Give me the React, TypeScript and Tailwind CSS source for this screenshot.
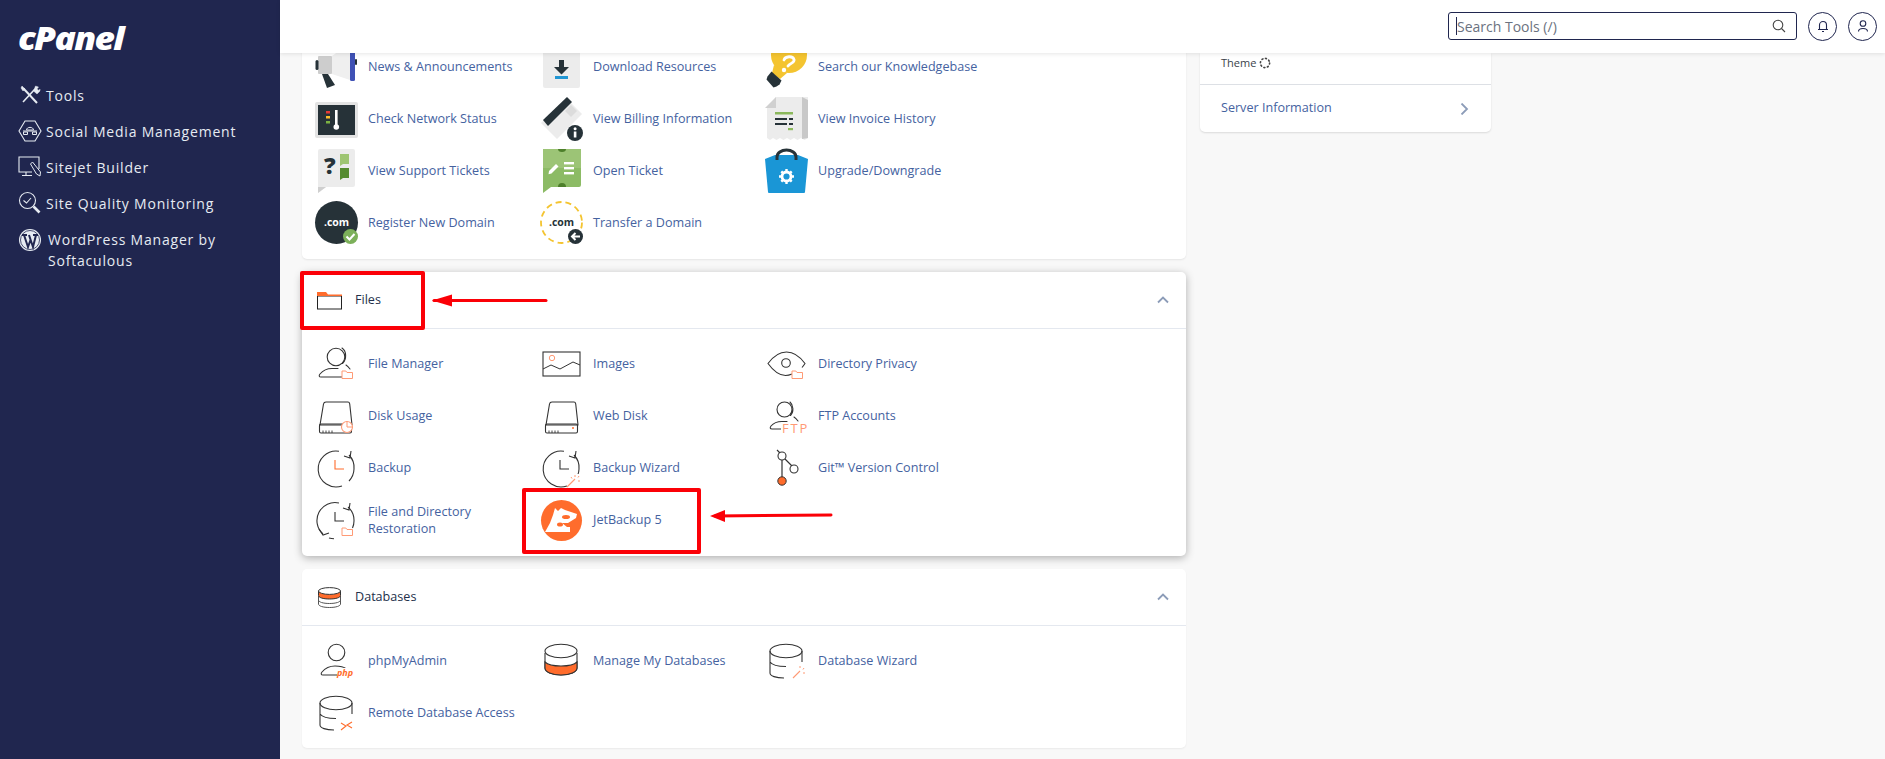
import React from "react";

const INK = "#333";
const OR = "#ff6c2c";
const ORL = "#ff9a75";

function Svg({ children, size = 43 }: { children: React.ReactNode; size?: number }) {
  return (
    <svg width={size} height={size} viewBox="0 0 43 43" fill="none" className="shrink-0 block overflow-visible">
      {children}
    </svg>
  );
}

const Folder = ({ x, y }: { x: number; y: number }) => (
  <path d={`M${x} ${y}v7.500h10.500v-6h-5.500l-1.200-1.500z`} stroke={ORL} strokeWidth="1" fill="#fff" />
);

const Person = () => (
  <g stroke={INK} strokeWidth="1.100" strokeLinecap="round">
    <circle cx="21" cy="15" r="8.800" />
    <path d="M27 6c4.500 3 5 11 .5 15.500M31 23c1.500 1 2.700 2.300 4 4" />
    <path d="M27 35H6c-2 0-2.300-1.500-1-3 2.500-3 7-5.500 12-5.500h6" />
  </g>
);

const Megaphone = () => (
  <Svg>
    <path d="M17 11L35 -2v37L17 29z" fill="#efefef" />
    <rect x="3" y="11" width="14" height="18" rx="1" fill="#cdcdcd" />
    <rect x="0.500" y="15" width="3" height="10" rx="1.500" fill="#263238" />
    <path d="M7 29h6l7 11-8 3z" fill="#263238" />
    <rect x="35" y="-10" width="5" height="46" rx="1.500" fill="#3f51b5" />
    <rect x="40" y="14" width="2" height="6" rx="1" fill="#263238" />
  </Svg>
);
const Download = () => (
  <Svg>
    <rect x="3" y="-8" width="37" height="51" rx="2" fill="#ececec" />
    <path d="M19 15h5v7h5l-7.500 7.500L14 22h5z" fill="#263238" />
    <rect x="15" y="31" width="13" height="3" fill="#2196d3" />
  </Svg>
);
const Bulb = () => (
  <Svg>
    <circle cx="24" cy="10" r="18" fill="#f4c430" />
    <path d="M9 20l13 8-7 6-8-6z" fill="#f4c430" />
    <path d="M5 27l10 9-2 4-3 2-3 1-7-8 1-3z" fill="#263238" transform="translate(1.500 -0.500)" />
    <path d="M19 15c1-4 9-4.500 10-.5 1 3.500-4 3.500-6 6.500" stroke="#fff" strokeWidth="2.800" fill="none" strokeLinecap="round" />
    <circle cx="19" cy="25" r="2.200" fill="#fff" />
  </Svg>
);
const Network = () => (
  <Svg>
    <rect x="0" y="5" width="43" height="36" rx="2" fill="#e3e3e3" />
    <rect x="3" y="8" width="37" height="30" fill="#263238" />
    <rect x="11" y="14" width="4" height="2.500" fill="#e53935" />
    <rect x="11" y="19" width="4" height="2.500" fill="#fbc02d" />
    <rect x="11" y="24" width="4" height="2.500" fill="#7cb342" />
    <rect x="20" y="13" width="2.600" height="16" fill="#fff" />
    <circle cx="21.300" cy="30" r="2.800" fill="#fff" />
  </Svg>
);
const Billing = () => (
  <Svg>
    <path d="M0 26L25 1l16 16-25 25z" fill="#ececec" transform="translate(1 0)" />
    <path d="M3 23L27 0l5 5L8 29z" fill="#263238" />
    <path d="M28 12l6-6 6 6-6 6z" fill="#dcdcdc" transform="translate(-3 2)" />
    <circle cx="35" cy="36" r="8" fill="#263238" />
    <rect x="33.800" y="34.500" width="2.600" height="6" fill="#fff" />
    <circle cx="35.100" cy="31.800" r="1.500" fill="#fff" />
  </Svg>
);
const Invoice = () => (
  <Svg>
    <path d="M11 0h32v41l-3.500 2-3.500-2-3.500 2-3.500-2-3.500 2-3.500-2-3.500 2-3.500-2-3.500 2-3.500-2-3 2-3-2V11z" fill="#ececec" />
    <path d="M37 0l6 3v38l-6 1z" fill="#c8c8c8" />
    <path d="M0 11L11 0v11z" fill="#d0d0d0" />
    <rect x="10" y="15" width="18" height="2.500" fill="#8bb85c" />
    <rect x="10" y="21" width="12" height="2" fill="#263238" />
    <rect x="24" y="21" width="4" height="2" fill="#263238" />
    <rect x="10" y="26" width="12" height="2" fill="#263238" />
    <rect x="24" y="26" width="4" height="2" fill="#263238" />
    <rect x="23" y="31" width="5" height="2.200" fill="#8bb85c" />
  </Svg>
);
const Support = () => (
  <Svg>
    <path d="M3 2a2 2 0 012-2h33a2 2 0 012 2v34a2 2 0 01-2 2H11l-8 6z" fill="#ececec" />
    <path d="M3 44l8-6H3z" fill="#cfcfcf" />
    <text x="9" y="25" fontFamily="'Open Sans', sans-serif" fontWeight="800" fontSize="23" fill="#263238">?</text>
    <path d="M25 5h9v10h-6l-3 2z" fill="#9ec572" />
    <path d="M25 19h9v10h-6l-3 2z" fill="#558b2f" />
  </Svg>
);
const Ticket = () => (
  <Svg>
    <path d="M3 2a2 2 0 012-2h34a2 2 0 012 2v34a2 2 0 01-2 2H11l-8 6z" fill="#8cbb65" />
    <path d="M3 0h38v19H3z" fill="#9cc476" />
    <path d="M18 0a4 3 0 008 0z" fill="#4d7f2a" />
    <path d="M18 38a4 4 0 018 0z" fill="#4d7f2a" />
    <path d="M9 22l7-7 2.500 2.500-7 7-3 .8z" fill="#fff" />
    <rect x="24" y="13" width="10" height="2.400" fill="#fff" />
    <rect x="24" y="18" width="10" height="2.400" fill="#fff" />
    <rect x="24" y="23" width="10" height="2.400" fill="#fff" />
  </Svg>
);
const Bag = () => (
  <Svg>
    <path d="M0 10l10-4h23l10 4-3 33a1 1 0 01-1 1H4a1 1 0 01-1-1z" fill="#1a96d6" />
    <path d="M12 11V8a9.500 7 0 0119 0v3" stroke="#263238" strokeWidth="3" />
    <g stroke="#fff" strokeWidth="2.400">
      <path d="M21.500 20v3M21.500 32v3M14 27.500h3M26 27.500h3M16.300 22.300l2 2M24.700 30.700l2 2M26.700 22.300l-2 2M18.300 30.700l-2 2" />
    </g>
    <circle cx="21.500" cy="27.500" r="4.500" stroke="#fff" strokeWidth="2.800" />
  </Svg>
);
const Register = () => (
  <Svg>
    <circle cx="21.500" cy="21.500" r="21.500" fill="#263238" />
    <text x="21.500" y="25" textAnchor="middle" fontFamily="'Open Sans', sans-serif" fontWeight="700" fontSize="10.500" fill="#fff">.com</text>
    <circle cx="35.500" cy="35.500" r="7.500" fill="#7cb05a" />
    <path d="M31.500 35.500l3 3 5-5.500" stroke="#fff" strokeWidth="2" />
  </Svg>
);
const Transfer = () => (
  <Svg>
    <circle cx="21.500" cy="21.500" r="20.500" stroke="#f4c430" strokeWidth="1.800" strokeDasharray="6 4" />
    <text x="21.500" y="25" textAnchor="middle" fontFamily="'Open Sans', sans-serif" fontWeight="700" fontSize="10.500" fill="#263238">.com</text>
    <circle cx="35.500" cy="35.500" r="7.500" fill="#263238" />
    <path d="M40 35.500h-7M35.500 32l-3.500 3.500 3.500 3.500" stroke="#fff" strokeWidth="2" />
  </Svg>
);
const FileManager = () => (
  <Svg>
    <Person />
    <Folder x={27} y={29} />
  </Svg>
);
const Images = () => (
  <Svg>
    <rect x="3" y="10" width="37" height="24" stroke={INK} strokeWidth="1.100" />
    <circle cx="12" cy="16" r="2.700" stroke={ORL} strokeWidth="1" />
    <path d="M3 27l8-4 9 4 13-7 7 3" stroke={INK} strokeWidth="1" />
  </Svg>
);
const DirPrivacy = () => (
  <Svg>
    <path d="M27 32c-2 .9-4 1.500-6.500 1.500C13 33.500 7 27 3 21.500 7 16 13 10 21.500 10S36 16 40 21.500c-1 1.500-2 2.800-3 4" stroke={INK} strokeWidth="1.100" />
    <circle cx="21" cy="21" r="4.300" stroke={INK} strokeWidth="1.100" />
    <Folder x={27} y={29} />
  </Svg>
);
const Disk = () => (
  <g stroke={INK} strokeWidth="1.100">
    <path d="M12 8h22c1 0 1.500 .8 1.700 1.800L38 31H6l3.500-21c.2-1 1.500-2 2.500-2z" />
    <rect x="5.500" y="30" width="32" height="9" rx="1.500" />
    <path d="M9 39v-2.500M12 39v-2.500M15 39v-2.500M18 39v-2.500" strokeWidth="0.900" />
  </g>
);
const DiskUsage = () => (
  <Svg>
    <g transform="translate(-1 0)">
      <Disk />
    </g>
    <circle cx="32" cy="33" r="5.500" stroke={ORL} strokeWidth="1.100" fill="#fff" />
    <path d="M32 33v-5.500M32 33h5.500" stroke={ORL} strokeWidth="1" />
  </Svg>
);
const WebDisk = () => (
  <Svg>
    <Disk />
    <circle cx="33" cy="34" r="1" fill={OR} />
  </Svg>
);
const FtpIcon = () => (
  <Svg>
    <g stroke={INK} strokeWidth="1.100" strokeLinecap="round">
      <circle cx="19.500" cy="15.500" r="7.500" />
      <path d="M25 8c3.500 3 4 10 .5 13.500M29 23c1.500 1 2.700 2.300 4 4" />
      <path d="M16 35H7c-2 0-2.300-1.300-1-3 2.500-3 6-4.500 11-4.500h5" />
    </g>
    <rect x="16" y="28" width="26" height="12" fill="#fff" />
    <text x="17" y="39" fontFamily="'Open Sans', sans-serif" fontSize="13" letterSpacing="1.800" fill={ORL}>FTP</text>
  </Svg>
);
const Clock = ({ hand }: { hand: string }) => (
  <g strokeWidth="1.100">
    <path d="M24 5.200A18 18 0 1027 40M34 9a18 18 0 015 14 18 18 0 01-5 12" stroke={INK} />
    <path d="M36 5l-1 7-6-2" stroke={INK} />
    <path d="M20 14v9h9" stroke={hand} />
  </g>
);
const Backup = () => (
  <Svg>
    <Clock hand={OR} />
  </Svg>
);
const BackupWizard = () => (
  <Svg>
    <Clock hand={INK} />
    <rect x="27" y="28" width="16" height="15" fill="#fff" />
    <path d="M27 41l8-8" stroke={ORL} strokeWidth="1.100" />
    <path d="M35 29v2M39 30l-1 1.500M40 35h-2M31 31l1 1.500" stroke={ORL} strokeWidth="1" />
  </Svg>
);
const Restoration = () => (
  <Svg>
    <path d="M24 5A18 18 0 008 36M14 40c2 .6 3.500 .8 5 .8M33 9a18 18 0 016 14c0 3-.6 5-1.500 7" stroke={INK} strokeWidth="1.100" />
    <path d="M35 5l-1 7-6-2M4 31l4 6 6-2" stroke={INK} strokeWidth="1.100" />
    <path d="M20 14v9h9" stroke={INK} strokeWidth="1.100" />
    <Folder x={27} y={30} />
  </Svg>
);
const Git = () => (
  <Svg>
    <path d="M12 4l3 3M17 14v17M20 13l7 7" stroke={INK} strokeWidth="1.200" />
    <circle cx="17" cy="10" r="4" stroke={INK} strokeWidth="1.100" />
    <circle cx="29" cy="23" r="4" stroke={INK} strokeWidth="1.100" />
    <circle cx="17" cy="35" r="4.200" fill={OR} stroke={INK} strokeWidth="1" />
  </Svg>
);
const JetBackup = () => (
  <Svg>
    <circle cx="21.500" cy="22.500" r="20.500" fill="#ff6c2c" />
    <path d="M15 10l3 3 3-3 4 2 12 4-1 4-8 5h-6l5 4h3v5H5l5-9 3-8z" fill="#fff" />
    <ellipse cx="26" cy="19" rx="4" ry="2" fill="#ff6c2c" />
    <ellipse cx="20" cy="26.500" rx="3" ry="2" fill="#ff6c2c" />
  </Svg>
);
const PhpIcon = () => (
  <Svg>
    <g stroke={INK} strokeWidth="1.100" strokeLinecap="round">
      <circle cx="21.500" cy="13.500" r="8.300" />
      <path d="M22 36H8c-2 0-2.300-1.500-1-3 2.500-3 7-6 13-6s9 1 11.500 3" />
    </g>
    <rect x="22" y="29" width="17" height="9" fill="#fff" />
    <text x="22" y="37" fontFamily="'Open Sans', sans-serif" fontStyle="italic" fontWeight="700" fontSize="9" fill={OR}>php</text>
  </Svg>
);
const ManageDb = () => (
  <Svg>
    <path d="M5 14v15c0 4 7 7 16 7s16-3 16-7V14" fill="#fff" stroke={INK} strokeWidth="1.100" />
    <path d="M5 23c3 3 9 4 16 4s13-1 16-4v6c0 4-7 7-16 7s-16-3-16-7z" fill={OR} stroke={INK} strokeWidth="1.100" />
    <ellipse cx="21" cy="12" rx="16" ry="6.800" fill="#fff" stroke={INK} strokeWidth="1.100" />
  </Svg>
);
const RemoteDb = () => (
  <Svg>
    <ellipse cx="21" cy="12" rx="16" ry="6.800" stroke={INK} strokeWidth="1.100" />
    <path d="M5 12v22c0 3 6 5 14 5M37 12v11M5 23c2 3 8 4.500 16 4.500" stroke={INK} strokeWidth="1.100" />
    <path d="M26 39l5-4-5-3M37 31l-5 3 5 3" stroke={OR} strokeWidth="1.100" />
  </Svg>
);
const DbWizard = () => (
  <Svg>
    <ellipse cx="21" cy="12" rx="16" ry="6.800" stroke={INK} strokeWidth="1.100" />
    <path d="M5 12v22c0 3 6 5 14 5M37 12v11M5 23c2 3 8 4.500 16 4.500" stroke={INK} strokeWidth="1.100" />
    <path d="M28 39l7-7" stroke={ORL} strokeWidth="1.100" />
    <path d="M35 27v2M39 29l-1 1.500M40 34h-2" stroke={ORL} strokeWidth="1" />
  </Svg>
);

const HeadFolder = () => (
  <svg width="25" height="19" viewBox="0 0 25 19" fill="none" className="shrink-0">
    <rect x="0.500" y="5" width="24" height="13" stroke="#222" />
    <path d="M0 5V1h9l2 2.500h14V5z" fill={OR} />
  </svg>
);
const HeadDb = () => (
  <svg width="25" height="21" viewBox="0 0 25 21" fill="none" className="shrink-0">
    <path d="M1.500 13v4c0 2 4.500 3.500 11 3.500s11-1.500 11-3.500v-4" stroke="#555" />
    <path d="M1.500 9v4c0 2 4.500 3.500 11 3.500s11-1.500 11-3.500V9" stroke="#555" />
    <path d="M1.500 4v4.500c0 2 4.500 3.500 11 3.500s11-1.500 11-3.500V4z" fill={OR} stroke="#333" />
    <ellipse cx="12.500" cy="4" rx="11" ry="3.400" fill="#fff" stroke="#333" />
  </svg>
);

const Chevron = ({ dir = "up" }: { dir?: "up" | "right" }) => (
  <svg width="12" height="12" viewBox="0 0 12 12" fill="none" stroke="#8c9cb8" strokeWidth="1.800" className="shrink-0">
    <path d={dir === "up" ? "M1 8.500l5-5 5 5" : "M3.500 .5l5.500 5.500-5.500 5.500"} />
  </svg>
);

type Tool = { label: React.ReactNode; icon: React.ReactNode };

function ToolGrid({ items }: { items: Tool[] }) {
  return (
    <div className="grid grid-cols-[225px_225px_225px] gap-y-[9px]">
      {items.map((t, i) => (
        <div key={i} className="flex items-center gap-[10px] h-[43px]">
          {t.icon}
          <span className="text-[12.6px] leading-[17px] text-[#45629f]">{t.label}</span>
        </div>
      ))}
    </div>
  );
}

function Section({ title, icon, items, strong, pad }: { title: string; icon: React.ReactNode; items: Tool[]; strong?: boolean; pad: string }) {
  return (
    <section className={`bg-white rounded-[5px] ${strong ? "shadow-[0_2px_8px_rgba(0,0,0,0.3)]" : "shadow-[0_1px_2px_rgba(0,0,0,0.06)]"}`}>
      <div className="h-[57px] border-b border-[#e4e8ef] flex items-center pl-[15px] pr-[17px]">
        <div className="w-[38px] shrink-0 flex items-center">{icon}</div>
        <h2 className="text-[12.6px] text-[#23304a] font-normal flex-1">{title}</h2>
        <Chevron />
      </div>
      <div className={pad}>
        <ToolGrid items={items} />
      </div>
    </section>
  );
}

const support: Tool[] = [
  { label: "News & Announcements", icon: <Megaphone /> },
  { label: "Download Resources", icon: <Download /> },
  { label: "Search our Knowledgebase", icon: <Bulb /> },
  { label: "Check Network Status", icon: <Network /> },
  { label: "View Billing Information", icon: <Billing /> },
  { label: "View Invoice History", icon: <Invoice /> },
  { label: "View Support Tickets", icon: <Support /> },
  { label: "Open Ticket", icon: <Ticket /> },
  { label: "Upgrade/Downgrade", icon: <Bag /> },
  { label: "Register New Domain", icon: <Register /> },
  { label: "Transfer a Domain", icon: <Transfer /> },
];
const files: Tool[] = [
  { label: "File Manager", icon: <FileManager /> },
  { label: "Images", icon: <Images /> },
  { label: "Directory Privacy", icon: <DirPrivacy /> },
  { label: "Disk Usage", icon: <DiskUsage /> },
  { label: "Web Disk", icon: <WebDisk /> },
  { label: "FTP Accounts", icon: <FtpIcon /> },
  { label: "Backup", icon: <Backup /> },
  { label: "Backup Wizard", icon: <BackupWizard /> },
  { label: "Git™ Version Control", icon: <Git /> },
  { label: <>File and Directory<br />Restoration</>, icon: <Restoration /> },
  { label: "JetBackup 5", icon: <JetBackup /> },
];
const databases: Tool[] = [
  { label: "phpMyAdmin", icon: <PhpIcon /> },
  { label: "Manage My Databases", icon: <ManageDb /> },
  { label: "Database Wizard", icon: <DbWizard /> },
  { label: "Remote Database Access", icon: <RemoteDb /> },
];

const NavIcon = ({ children }: { children: React.ReactNode }) => (
  <svg width="24" height="24" viewBox="0 0 24 24" fill="none" stroke="#e6ebf2" strokeWidth="1.100" className="shrink-0">
    {children}
  </svg>
);

const nav: { label: string; icon: React.ReactNode }[] = [
  {
    label: "Tools",
    icon: (
      <NavIcon>
        <path d="M5.500 5.500L19 20" strokeWidth="2" />
        <path d="M17 6L5 19" strokeWidth="1.600" />
        <path d="M15.500 8l2-5 3 1-1.500 2 2 1.500 1-1.500 0 2-3 3z" fill="#e6ebf2" strokeWidth="0.400" />
        <path d="M4 3l3 3-2 2-2-3z" fill="#e6ebf2" strokeWidth="0.500" />
      </NavIcon>
    ),
  },
  {
    label: "Social Media Management",
    icon: (
      <NavIcon>
        <path d="M7 2h10l6 10-6 10H7L1 12z" />
        <path d="M8.500 11c0-3.500 7-3.500 7 0zM5 12h14M5.500 15.500h4V13h-4zM14.500 15.500h4V13h-4z" strokeWidth="1" />
      </NavIcon>
    ),
  },
  {
    label: "Sitejet Builder",
    icon: (
      <NavIcon>
        <path d="M21 14V2H1v15h13" />
        <path d="M8 17v3M4 20.500h10" />
        <path d="M12.500 9l2-2 8 10-.5 4-3.500-2z" fill="#20264f" strokeWidth="1" />
      </NavIcon>
    ),
  },
  {
    label: "Site Quality Monitoring",
    icon: (
      <NavIcon>
        <circle cx="9.500" cy="9.500" r="8" />
        <path d="M5.500 9.500l3 2.500 4.500-5" />
        <path d="M15.500 15.500l6 6" strokeWidth="2.600" />
      </NavIcon>
    ),
  },
];

function Annotation() {
  return (
    <svg width="420" height="300" viewBox="0 0 420 300" fill="none" className="absolute left-[420px] top-[260px] pointer-events-none">
      <path d="M14 40.500h112" stroke="#fb0007" strokeWidth="3" strokeLinecap="round" />
      <path d="M12 40.500l20-6v12z" fill="#fb0007" />
      <path d="M295 256l116 -1" stroke="#fb0007" strokeWidth="3" strokeLinecap="round" />
      <path d="M290 256l15-6v12z" fill="#fb0007" />
    </svg>
  );
}

export default function App() {
  return (
    <div className="relative flex h-screen overflow-hidden bg-[#f8f8f8] [font-family:'Open_Sans',sans-serif]">
      <aside className="w-[280px] shrink-0 bg-[#20264f] pl-[18px] pr-[10px] text-[#e6ebf2]">
        <div className="h-[77px] pt-[21px]">
          <span className="block origin-left scale-x-[1.14] text-[31px] leading-[34px] font-extrabold italic tracking-[-1.500px] text-white">cPanel</span>
        </div>
        <nav className="text-[14px] tracking-[0.8px]">
          {nav.map((n, i) => (
            <div key={i} className="flex items-center gap-[4px] h-[36px]">
              {n.icon}
              <span>{n.label}</span>
            </div>
          ))}
          <div className="flex items-start gap-[6px] pt-[8px]">
            <svg width="24" height="24" viewBox="0 0 24 24" className="shrink-0 mt-[-1px]">
              <circle cx="12" cy="12" r="11" fill="#e6ebf2" />
              <circle cx="12" cy="12" r="9.500" fill="none" stroke="#20264f" strokeWidth="0.800" />
              <path d="M4 7h5M15 7h5M6 7l4 12 2.500-7M11 7l4 12 3-12" stroke="#20264f" strokeWidth="2" fill="none" />
            </svg>
            <span className="leading-[21px]">WordPress Manager by<br />Softaculous</span>
          </div>
        </nav>
      </aside>

      <div className="flex-1 flex flex-col min-w-0">
        <header className="relative z-10 h-[53px] shrink-0 bg-white shadow-[0_1px_4px_rgba(0,0,0,0.1)] flex items-center justify-end gap-[11px] pr-[8px]">
          <div className="w-[349px] h-[28px] mb-[1px] rounded-[3px] border border-[#20264f] flex items-center pl-[7px] pr-[10px]">
            <span className="w-px h-[18px] bg-[#20264f] shrink-0" />
            <span className="flex-1 text-[14px] text-[#6b7280]">Search Tools (/)</span>
            <svg width="14" height="14" viewBox="0 0 14 14" fill="none" stroke="#444" strokeWidth="1.100">
              <circle cx="6" cy="6" r="4.800" />
              <path d="M9.500 9.500L13 13" />
            </svg>
          </div>
          <div className="w-[29px] h-[29px] mb-[1px] rounded-full border border-[#20264f] flex items-center justify-center">
            <svg width="14" height="14" viewBox="0 0 14 14" fill="none" stroke="#20264f" strokeWidth="1.100">
              <path d="M3.500 10V6a3.500 3.500 0 017 0v4M2 10.500h10M6 12.500h2" />
            </svg>
          </div>
          <div className="w-[29px] h-[29px] mb-[1px] rounded-full border border-[#20264f] flex items-center justify-center">
            <svg width="14" height="14" viewBox="0 0 14 14" fill="none" stroke="#20264f" strokeWidth="1.100">
              <circle cx="7" cy="4.500" r="2.800" />
              <path d="M2.500 12.500c0-4 9-4 9 0" />
            </svg>
          </div>
        </header>

        <main className="flex-1 min-h-0 overflow-hidden flex gap-[14px] pl-[22px] items-start">
          <div className="w-[884px] shrink-0 flex flex-col">
            <section className="bg-white rounded-b-[5px] shadow-[0_1px_2px_rgba(0,0,0,0.08)] pl-[13px] pb-[15px] mt-[-8px]">
              <ToolGrid items={support} />
            </section>
            <div className="h-[13px] shrink-0" />
            <Section title="Files" icon={<HeadFolder />} items={files} strong pad="pl-[13px] pt-[13px] pb-[15px]" />
            <div className="h-[13px] shrink-0" />
            <Section title="Databases" icon={<HeadDb />} items={databases} pad="pl-[13px] pt-[13px] pb-[14px]" />
          </div>
          <div className="w-[291px] shrink-0 bg-white rounded-b-[5px] shadow-[0_1px_2px_rgba(0,0,0,0.12)]">
            <div className="h-[32px] border-b border-[#dde0e5] pl-[21px] flex items-start">
              <span className="text-[11px] leading-[20px] text-[#3a3f4a] flex items-center gap-[3px]">
                Theme
                <svg width="12" height="12" viewBox="0 0 12 12" fill="none" stroke="#444" strokeWidth="1.600" strokeDasharray="1 2.600" strokeLinecap="round">
                  <circle cx="6" cy="6" r="4.600" />
                </svg>
              </span>
            </div>
            <div className="h-[47px] pl-[21px] pr-[21px] flex items-center justify-between">
              <span className="text-[12.6px] text-[#45629f]">Server Information</span>
              <Chevron dir="right" />
            </div>
          </div>
        </main>
      </div>

      {/* annotations over the screenshot */}
      <div className="absolute left-[300px] top-[271px] w-[125px] h-[59px] border-4 border-[#fb0007] rounded-[2px] pointer-events-none" />
      <div className="absolute left-[522px] top-[488px] w-[179px] h-[66px] border-4 border-[#fb0007] rounded-[2px] pointer-events-none" />
      <Annotation />
    </div>
  );
}
